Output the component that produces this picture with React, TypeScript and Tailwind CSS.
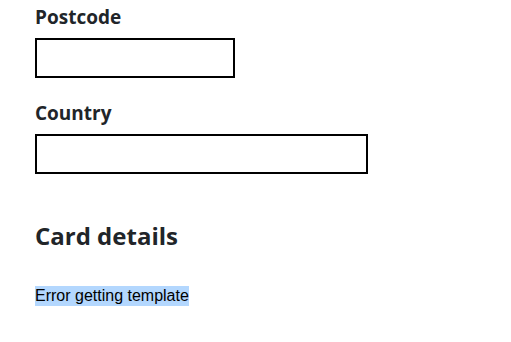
export default function App() {
  return (
    <div className="min-h-screen bg-white px-[35px] pt-[5px] text-[#212529] [font-family:'Open_Sans',sans-serif]">
      <label className="block text-[19px] font-bold leading-[25px]">Postcode</label>
      <input className="mt-[8px] block h-[40px] w-[200px] border-2 border-black bg-white outline-none" />

      <label className="mt-[23px] block text-[19px] font-bold leading-[25px]">Country</label>
      <input className="mt-[8px] block h-[40px] w-[333px] border-2 border-black bg-white outline-none" />

      <h2 className="mt-[47px] text-[24px] font-bold leading-[30px]">Card details</h2>

      <p className="mt-[35px] text-[16px] leading-[20px] text-black [font-family:'Liberation_Sans',Arial,sans-serif]">
        <span className="inline-block bg-[#b3d7fe] leading-[20px]">Error getting template</span>
      </p>
    </div>
  );
}
